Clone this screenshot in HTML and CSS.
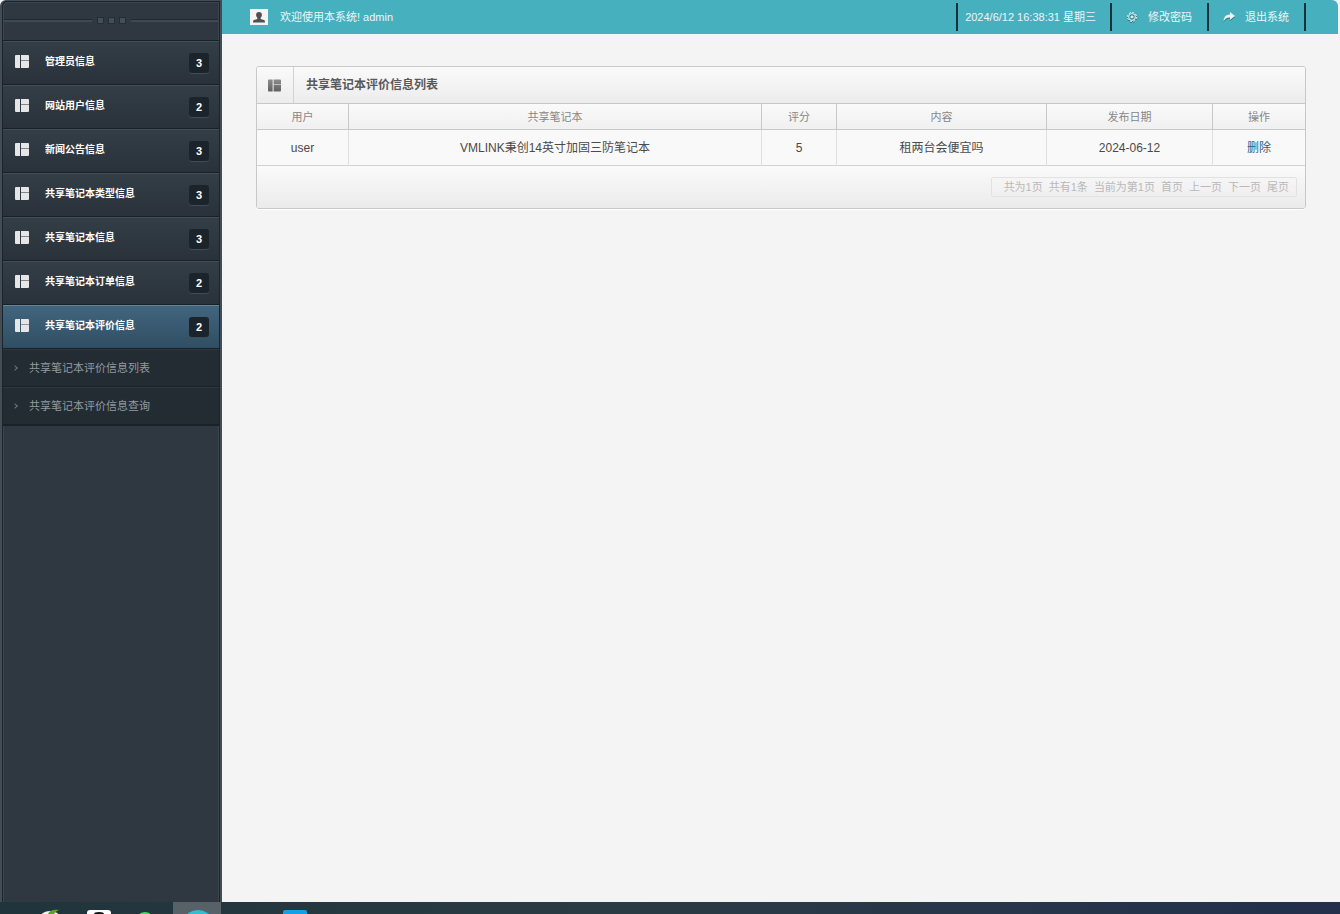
FILE: index.html
```html
<!DOCTYPE html>
<html lang="zh-CN">
<head>
    <meta charset="UTF-8">
    <title>共享笔记本评价信息列表</title>
    <link rel="stylesheet" href="styles.css">
</head>
<body>
    <svg class="defs" width="0" height="0">
        <symbol id="blocks" viewBox="0 0 14 13">
            <path d="M1 0h4v13H1a1 1 0 0 1-1-1V1a1 1 0 0 1 1-1zM6 0h7a1 1 0 0 1 1 1v4H6zM6 6h8v6a1 1 0 0 1-1 1H6z"/>
            <path opacity=".45" d="M6 5h8v1H6z"/>
        </symbol>
    </svg>

    <div class="wrap">
        <div class="side">
            <div class="sideTop"><i></i><i></i><i></i></div>
            <ul class="menu">
                <li><a href="#"><svg><use href="#blocks"/></svg><span>管理员信息</span><b>3</b></a></li>
                <li><a href="#"><svg><use href="#blocks"/></svg><span>网站用户信息</span><b>2</b></a></li>
                <li><a href="#"><svg><use href="#blocks"/></svg><span>新闻公告信息</span><b>3</b></a></li>
                <li><a href="#"><svg><use href="#blocks"/></svg><span>共享笔记本类型信息</span><b>3</b></a></li>
                <li><a href="#"><svg><use href="#blocks"/></svg><span>共享笔记本信息</span><b>3</b></a></li>
                <li><a href="#"><svg><use href="#blocks"/></svg><span>共享笔记本订单信息</span><b>2</b></a></li>
                <li>
                    <a href="#" class="active"><svg><use href="#blocks"/></svg><span>共享笔记本评价信息</span><b>2</b></a>
                    <ul class="sub">
                        <li><a href="#">共享笔记本评价信息列表</a></li>
                        <li><a href="#">共享笔记本评价信息查询</a></li>
                    </ul>
                </li>
            </ul>
        </div>

        <div class="main">
            <div class="top">
                <div class="welcome">
                    <svg class="face" viewBox="0 0 18 16">
                        <path class="bg" d="M0 0h18v16H0z"/>
                        <path d="M9 3c1.900 0 2.900 1.100 2.900 2.800 0 1.500-.7 2.500-1.300 3.100v1l3.400 1.200c.7.300 1 .9 1 2.400H3c0-1.500.3-2.100 1-2.400l3.400-1.200v-1C6.800 8.300 6.100 7.300 6.100 5.800 6.100 4.100 7.100 3 9 3z"/>
                    </svg>
                    <span>欢迎使用本系统! admin</span>
                </div>
                <ul class="topNav">
                    <li class="time">2024/6/12 16:38:31 星期三</li>
                    <li><a href="#">
                        <svg viewBox="0 0 12 12" class="gear">
                            <circle cx="6" cy="6" r="4.500" class="teeth"/>
                            <circle cx="6" cy="6" r="3.400"/>
                            <circle cx="6" cy="6" r="1" class="dot"/>
                        </svg>修改密码</a></li>
                    <li><a href="#">
                        <svg viewBox="0 0 12 12" class="share">
                            <path d="M7 1l5 4-5 4V6.500C4 6.400 2 7.500.6 10.500.6 6 3 3.600 7 3.500z"/>
                        </svg>退出系统</a></li>
                </ul>
            </div>

            <div class="panel">
                <div class="title">
                    <svg viewBox="0 0 14 13">
                        <linearGradient id="grey" x2="0" y2="1">
                            <stop stop-color="#8c8c8c"/>
                            <stop offset="1" stop-color="#616161"/>
                        </linearGradient>
                        <path fill="url(#grey)" d="M1 0h4v13H1a1 1 0 0 1-1-1V1a1 1 0 0 1 1-1zM6 0h7a1 1 0 0 1 1 1v4H6zM6 6h8v6a1 1 0 0 1-1 1H6z"/>
                        <path fill="#bdbdbd" d="M6 5h8v1H6z"/>
                    </svg>
                    <h1>共享笔记本评价信息列表</h1>
                </div>
                <table>
                    <colgroup>
                        <col class="user"><col><col class="score"><col class="content"><col class="date"><col class="act">
                    </colgroup>
                    <thead>
                        <tr><th>用户</th><th>共享笔记本</th><th>评分</th><th>内容</th><th>发布日期</th><th>操作</th></tr>
                    </thead>
                    <tbody>
                        <tr><td>user</td><td>VMLINK秉创14英寸加固三防笔记本</td><td>5</td><td>租两台会便宜吗</td><td>2024-06-12</td><td><a href="#">删除</a></td></tr>
                    </tbody>
                </table>
                <div class="foot">
                    <div class="page">
                        <span>共为1页</span><span>共有1条</span><span>当前为第1页</span>
                        <a href="#">首页</a><a href="#">上一页</a><a href="#">下一页</a><a href="#">尾页</a>
                    </div>
                </div>
            </div>
        </div>
    </div>

    <div class="taskbar">
        <svg width="340" height="12" viewBox="0 0 340 12">
            <path fill="#566168" d="M173 0h48v12h-48z"/>
            <ellipse cx="50" cy="16" rx="10" ry="7" fill="#f4f7ee"/>
            <path fill="#5da02c" d="M48 12c1-3 5-5 11-4-3 1-4 3-5 4z"/>
            <rect x="87" y="8" width="24" height="8" rx="3" fill="#fff"/>
            <ellipse cx="99" cy="12" rx="5" ry="2" fill="#111"/>
            <circle cx="145" cy="19" r="9" fill="#4bd66b"/>
            <ellipse cx="198" cy="17" rx="13" ry="9" fill="#2fbfd0"/>
            <rect x="283" y="8" width="24" height="8" rx="2" fill="#12a0e6"/>
        </svg>
    </div>
</body>
</html>
```
FILE: styles.css
```css
*{
    box-sizing: border-box;
}
body{
    margin: 0;
    min-height: 100vh;
    display: flex;
    flex-direction: column;
    background: #f4f4f4;
    color: #4a4a4a;
    font: 12px/16px "Liberation Sans", "Noto Sans CJK SC", sans-serif;
}
ul{
    list-style: none;
    margin: 0;
    padding: 0;
}
a{
    text-decoration: none;
}
.defs{
    position: absolute;
}
.wrap{
    flex: 1;
    display: flex;
}

/* 左侧菜单 */
.side{
    width: 222px;
    flex: none;
    padding-top: 1px;
    border: solid #434d56;
    border-width: 1px 2px 0 2px;
    border-radius: 6px 0 0 0;
    background: #2f3841;
    box-shadow: inset 1px 1px #1b242b, inset -1px 0 #1b242b, inset 2px 2px #3b454e, inset -2px 0 #3b454e;
}
.sideTop{
    height: 38px;
    margin: 0 2px;
    padding-bottom: 2px;
    display: flex;
    align-items: center;
    justify-content: center;
    gap: 4px;
}
.sideTop:before,.sideTop:after{
    content: "";
    flex: 1;
    height: 2px;
    background: #3f4952;
    border-top: 1px solid #202930;
}
.sideTop:before{
    margin-right: 1px;
}
.sideTop:after{
    margin-left: 1px;
}
.sideTop i{
    width: 7px;
    height: 7px;
    background: #434e57;
    border: 1px solid #242d34;
}
.menu{
    margin: 0 1px;
    border-bottom: 2px solid #1a2228;
}
.menu>li>a{
    height: 44px;
    padding: 0 10px 2px 12px;
    display: flex;
    align-items: center;
    color: #fff;
    font-size: 10px;
    font-weight: bold;
    border-top: 1px solid #192127;
    background: linear-gradient(#343e47, #29323a);
    box-shadow: inset 0 1px #434d56;
}
.menu>li>a.active{
    background: linear-gradient(#42657f, #304e63);
    box-shadow: inset 0 1px #668299;
}
.menu svg{
    width: 14px;
    height: 13px;
    fill: #e6e6e6;
    margin-right: 16px;
}
.menu span{
    flex: 1;
}
.menu b{
    width: 20px;
    height: 20px;
    margin-top: 2px;
    line-height: 20px;
    text-align: center;
    font-size: 11px;
    border-radius: 3px;
    background: #1b242a;
    box-shadow: 0 1px #414b53;
}
.sub a{
    height: 38px;
    padding-left: 10px;
    display: flex;
    align-items: center;
    color: #929a9f;
    font-size: 11px;
    background: #232c33;
    border-top: 1px solid #192127;
    box-shadow: inset 0 1px #303940;
}
.sub a:before{
    content: "";
    width: 3px;
    height: 3px;
    margin-right: 12px;
    border: solid #6b757c;
    border-width: 1px 1px 0 0;
    transform: rotate(45deg);
}

/* 顶部 */
.main{
    flex: 1;
    min-width: 0;
}
.top{
    height: 34px;
    padding: 0 32px 0 28px;
    margin-right: 2px;
    display: flex;
    align-items: center;
    justify-content: space-between;
    color: #e8f7f9;
    font-size: 11px;
    background: #47b0bf;
    border-radius: 0 6px 0 0;
}
.welcome{
    display: flex;
    align-items: center;
    gap: 12px;
}
.face{
    width: 18px;
    height: 16px;
    fill: #505050;
}
.face .bg{
    fill: #f4f4f4;
}
.topNav{
    display: flex;
    border-left: 2px solid #17323a;
}
.topNav li{
    height: 28px;
    padding: 0 15px 0 14px;
    display: flex;
    align-items: center;
    border-right: 2px solid #17323a;
}
.topNav li.time{
    padding: 0 14px 0 7px;
}
.topNav a{
    color: #e8f7f9;
    display: flex;
    align-items: center;
}
.topNav svg{
    width: 12px;
    height: 12px;
    margin-right: 10px;
    fill: #e8f4f5;
    filter: drop-shadow(0 1px #2c6973);
}
.gear circle{
    fill: none;
    stroke: #e8f4f5;
}
.gear .teeth{
    stroke-width: 1px;
    stroke-dasharray: 2 1.500;
}
.gear .dot{
    fill: #e8f4f5;
}

/* 列表 */
.panel{
    margin: 32px 34px;
    border: 1px solid #c8c8c8;
    border-radius: 3px;
    background: #f9f9f9;
    box-shadow: 0 1px #fff;
    overflow: hidden;
}
.title{
    height: 37px;
    display: flex;
    align-items: center;
    background: linear-gradient(#fafafa, #ececec);
    border-bottom: 1px solid #c8c8c8;
}
.title svg{
    width: 37px;
    height: 36px;
    padding: 12px 12px 11px 11px;
    border-right: 1px solid #d2d2d2;
}
.title h1{
    margin: 0 0 0 12px;
    font-size: 12px;
    font-weight: bold;
    color: #595959;
}
table{
    width: 100%;
    table-layout: fixed;
    border-collapse: separate;
    border-spacing: 0;
    text-align: center;
}
.user{
    width: 92px;
}
.score{
    width: 75px;
}
.content{
    width: 210px;
}
.date{
    width: 166px;
}
.act{
    width: 92px;
}
th,td{
    padding: 0;
    border-right: 1px solid #dfdfdf;
    border-bottom: 1px solid #d2d2d2;
}
th{
    height: 26px;
    font-size: 11px;
    font-weight: normal;
    color: #878787;
    background: linear-gradient(#fafafa, #f0f0f0);
    border-color: #c8c8c8;
}
td{
    height: 36px;
}
th:last-child,td:last-child{
    border-right: 0;
}
td a{
    color: #2a6187;
}
.foot{
    height: 42px;
    padding: 0 8px;
    display: flex;
    align-items: center;
    justify-content: flex-end;
    background: linear-gradient(#fafafa, #ebebeb);
}
.page{
    height: 20px;
    padding: 0 7px 0 12px;
    display: flex;
    align-items: center;
    gap: 6px;
    font-size: 11px;
    color: #b9b9b9;
    border: 1px solid #e2e2e2;
    border-radius: 2px;
}
.page a{
    color: #b9b9b9;
}

/* 底部任务栏 */
.taskbar{
    height: 12px;
    overflow: hidden;
    background: linear-gradient(90deg, #20343b, #2a3b43 45%, #27364a 75%, #232f4b);
}
.taskbar svg{
    display: block;
}
```
